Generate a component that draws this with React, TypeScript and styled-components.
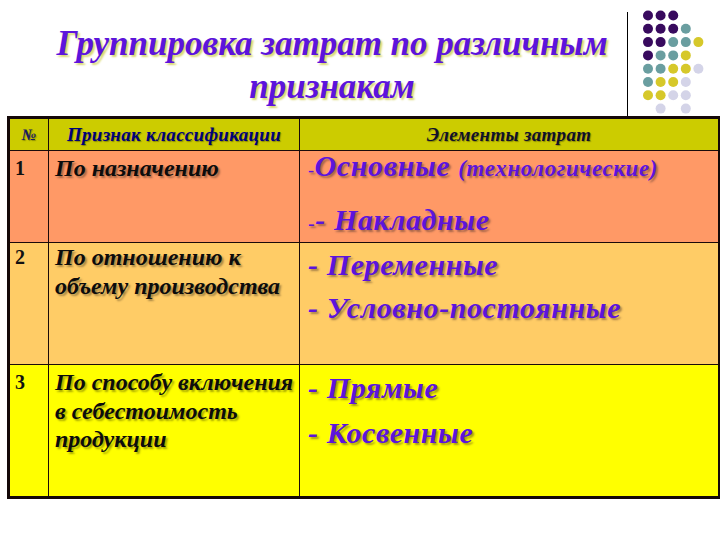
import React from "react";
import styled, { createGlobalStyle } from "styled-components";

const SERIF = `"Liberation Serif", "Times New Roman", serif`;

const Global = createGlobalStyle`
  html, body { margin: 0; padding: 0; background: #ffffff; }
  body { font-family: ${SERIF}; }
`;

const Page = styled.div`
  width: 720px;
  height: 540px;
  overflow: hidden;
  background: #ffffff;
`;

const Header = styled.header`
  display: flex;
  height: 116px;
`;

const Title = styled.h1`
  flex: 0 0 590px;
  margin: 0;
  padding: 22px 0 0 37px;
  text-align: center;
  font-family: ${SERIF};
  font-style: italic;
  font-weight: bold;
  font-size: 35px;
  line-height: 43px;
  color: #5c14dc;
  white-space: nowrap;
  text-shadow: 2px 2px 2px #d8d870;
`;

const Divider = styled.div`
  width: 1px;
  margin-top: 12px;
  background: #000000;
`;

const Dots = styled.svg`
  margin: 9px 0 0 15px;
`;

const Table = styled.div`
  margin-left: 7px;
  width: 713px;
  box-sizing: border-box;
  border: 3px solid #140808;
  border-right-width: 2px;
  display: grid;
  grid-template-columns: 38px 250px 1fr;
  grid-template-rows: 31px 91px 121px 131px;
  gap: 1px;
  background: #1a0a0a;
`;

const HeadCell = styled.div<{ $size: number; $color: string }>`
  background: #cccc00;
  display: flex;
  align-items: center;
  justify-content: center;
  font-style: italic;
  font-weight: bold;
  font-size: ${(p) => p.$size}px;
  letter-spacing: 0.3px;
  color: ${(p) => p.$color};
  text-shadow: 1px 1px 1px rgba(60, 60, 0, 0.45);
  white-space: nowrap;
`;

const NumCell = styled.div<{ $bg: string; $pt: number }>`
  background: ${(p) => p.$bg};
  padding: ${(p) => p.$pt}px 0 0 5px;
  font-weight: bold;
  font-size: 20px;
  line-height: 28.5px;
  color: #111111;
`;

const SignCell = styled.div<{ $bg: string; $pt: number }>`
  background: ${(p) => p.$bg};
  padding: ${(p) => p.$pt}px 0 0 6px;
  font-style: italic;
  font-weight: bold;
  font-size: 24px;
  line-height: 28.5px;
  color: #0c0c0c;
  text-shadow: 2px 2px 2px rgba(0, 0, 0, 0.35);
  white-space: nowrap;
`;

const ElemCell = styled.div<{ $bg: string; $pt: number; $gap: number }>`
  background: ${(p) => p.$bg};
  padding: ${(p) => p.$pt}px 0 0 8px;
  display: flex;
  flex-direction: column;
  gap: ${(p) => p.$gap}px;
`;

const ElemLine = styled.div`
  font-style: italic;
  font-weight: bold;
  font-size: 30px;
  line-height: 30px;
  letter-spacing: 0.6px;
  color: #5c14dc;
  text-shadow: 2px 2px 2px rgba(60, 40, 40, 0.45);
  white-space: nowrap;
`;

const Small = styled.span<{ $size: number; $bold?: boolean }>`
  font-size: ${(p) => p.$size}px;
  font-weight: ${(p) => (p.$bold ? "bold" : "normal")};
  font-style: ${(p) => (p.$bold ? "italic" : "normal")};
`;

const P = "#380a5e";
const T = "#6a9ea0";
const Y = "#d6c82a";
const L = "#d4d4e8";

const grid: (string | null)[][] = [
  [P, P, P, null, null],
  [P, P, P, T, null],
  [P, P, T, T, Y],
  [P, T, T, Y, null],
  [T, T, Y, Y, L],
  [T, Y, Y, L, null],
  [Y, Y, L, L, null],
  [null, L, null, L, null],
];

const rows = [
  { bg: "#ff9966", pt: 3 },
  { bg: "#ffcc66", pt: 0 },
  { bg: "#ffff00", pt: 3 },
];

export default function App() {
  return (
    <Page>
      <Global />
      <Header>
        <Title>
          Группировка затрат по различным
          <br />
          признакам
        </Title>
        <Divider />
        <Dots width="68" height="106" viewBox="0 0 68 106">
          {grid.map((r, ri) =>
            r.map((c, ci) =>
              c ? (
                <circle
                  key={`${ri}-${ci}`}
                  cx={5 + ci * 12.6}
                  cy={6.5 + ri * 13.3}
                  r={5}
                  fill={c}
                />
              ) : null
            )
          )}
        </Dots>
      </Header>
      <Table>
        <HeadCell $size={16} $color="#1a1a60">№</HeadCell>
        <HeadCell $size={19} $color="#00007a">Признак классификации</HeadCell>
        <HeadCell $size={19} $color="#10102a">Элементы затрат</HeadCell>

        <NumCell $bg={rows[0].bg} $pt={rows[0].pt}>1</NumCell>
        <SignCell $bg={rows[0].bg} $pt={rows[0].pt}>По назначению</SignCell>
        <ElemCell $bg={rows[0].bg} $pt={0} $gap={20}>
          <ElemLine>
            <Small $size={18}>-</Small>Основные <Small $size={23} $bold>(технологические)</Small>
          </ElemLine>
          <ElemLine>
            <Small $size={20}>-</Small>- Накладные
          </ElemLine>
        </ElemCell>

        <NumCell $bg={rows[1].bg} $pt={rows[1].pt}>2</NumCell>
        <SignCell $bg={rows[1].bg} $pt={rows[1].pt}>
          По отношению к
          <br />
          объему производства
        </SignCell>
        <ElemCell $bg={rows[1].bg} $pt={7} $gap={13}>
          <ElemLine>- Переменные</ElemLine>
          <ElemLine>- Условно-постоянные</ElemLine>
        </ElemCell>

        <NumCell $bg={rows[2].bg} $pt={rows[2].pt}>3</NumCell>
        <SignCell $bg={rows[2].bg} $pt={rows[2].pt}>
          По способу включения
          <br />в себестоимость
          <br />
          продукции
        </SignCell>
        <ElemCell $bg={rows[2].bg} $pt={8} $gap={15}>
          <ElemLine>- Прямые</ElemLine>
          <ElemLine>- Косвенные</ElemLine>
        </ElemCell>
      </Table>
    </Page>
  );
}
